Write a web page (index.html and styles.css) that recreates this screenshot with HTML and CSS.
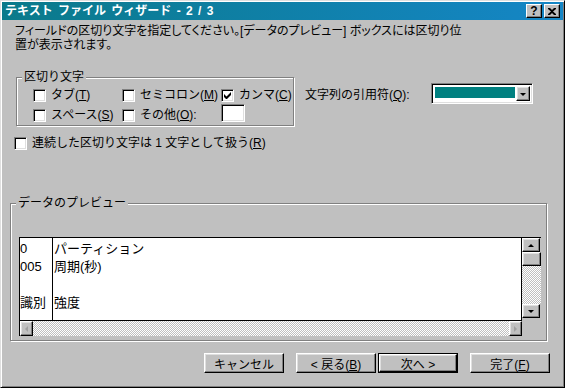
FILE: index.html
```html
<!DOCTYPE html>
<html lang="ja">
<head>
  <meta charset="UTF-8">
  <title>テキスト ファイル ウィザード - 2 / 3</title>
  <link rel="stylesheet" href="styles.css">
</head>
<body>
  <div class="dialog">
    <div class="titlebar">
      <span class="title">テキスト ファイル ウィザード - 2 / 3</span>
      <span class="tb-btn tb-help">?</span>
      <span class="tb-btn tb-close">
        <svg width="8" height="7" viewBox="0 0 8 7"><path d="M0 0h2l2 2 2-2h2v1L5 3.5 8 6v1H6L4 5 2 7H0V6l3-2.5L0 1z" fill="#000"/></svg>
      </span>
    </div>

    <div class="content">
      <p class="intro">フィールドの区切り文字を指定してください。[データのプレビュー] ボックスには区切り位<br>置が表示されます。</p>

      <div class="options">
        <div class="group delim">
          <span class="group-label">区切り文字</span>
          <div class="delim-grid">
            <label class="check"><span class="box"></span><span>タブ(<u>T</u>)</span></label>
            <label class="check"><span class="box"></span><span>セミコロン(<u>M</u>)</span></label>
            <label class="check"><span class="box"><svg width="7" height="7" viewBox="0 0 7 7"><path d="M0 2v3l2 2h1l4-4V0L2.5 4.5z" fill="#000"/></svg></span><span>カンマ(<u>C</u>)</span></label>
            <label class="check"><span class="box"></span><span>スペース(<u>S</u>)</span></label>
            <label class="check"><span class="box"></span><span>その他(<u>O</u>):</span></label>
            <span class="field other"></span>
          </div>
        </div>

        <div class="quote">
          <span class="quote-label">文字列の引用符(<u>Q</u>):</span>
          <div class="combo">
            <div class="combo-val"><span class="combo-sel"></span></div>
            <span class="combo-btn btn3d"><span class="tri-down"></span></span>
          </div>
        </div>
      </div>

      <label class="check consec"><span class="box"></span><span>連続した区切り文字は 1 文字として扱う(<u>R</u>)</span></label>

      <div class="group preview">
        <span class="group-label">データのプレビュー</span>
        <div class="pv-box">
          <div class="pv-data">
            <div class="pv-col first">
              <div>0</div>
              <div>005</div>
              <div>&nbsp;</div>
              <div>識別</div>
            </div>
            <div class="pv-col">
              <div>パーティション</div>
              <div>周期(秒)</div>
              <div>&nbsp;</div>
              <div>強度</div>
            </div>
          </div>
          <div class="vscroll">
            <span class="sb-btn btn3d"><span class="tri-up"></span></span>
            <span class="sb-thumb btn3d"></span>
            <span class="sb-track"></span>
            <span class="sb-btn btn3d"><span class="tri-down"></span></span>
          </div>
          <div class="hscroll">
            <span class="sb-btn btn3d"><span class="tri-left"></span></span>
            <span class="sb-track"></span>
            <span class="sb-btn btn3d"><span class="tri-right"></span></span>
          </div>
          <div class="corner"></div>
        </div>
      </div>

      <div class="buttons">
        <span class="btn btn3d">キャンセル</span>
        <span class="btn btn3d back"><span>&lt; 戻る(<u>B</u>)</span></span>
        <span class="btn default"><span class="btn3d">次へ &gt;</span></span>
        <span class="btn btn3d finish"><span>完了(<u>F</u>)</span></span>
      </div>
    </div>
  </div>
</body>
</html>
```

FILE: styles.css
```css
body { margin: 0; font-family: "Liberation Sans", "Noto Sans CJK JP", sans-serif; font-size: 12px; color: #000; }
u { text-decoration: underline; text-underline-offset: 1px; }

.dialog { box-sizing: border-box; width: 565px; height: 388px; background: #c0c0c0; padding: 1px;
  border: 1px solid; border-color: #dfdfdf #000 #000 #dfdfdf; box-shadow: inset 1px 1px #fff, inset -1px -1px #808080; }

.titlebar { height: 18px; display: flex; align-items: center; padding: 0 3px 0 3px; color: #fff;
  background: linear-gradient(to right, #0a7a8a, #1586c6); }
.title { flex: 1; font-weight: bold; font-size: 12px; line-height: 14px; white-space: pre; word-spacing: 2px; }
.tb-btn { box-sizing: border-box; width: 16px; height: 14px; background: #c0c0c0; color: #000; display: flex; align-items: center; justify-content: center;
  border: 1px solid; border-color: #fff #000 #000 #fff; box-shadow: inset -1px -1px #808080; font: bold 12px "Liberation Sans", sans-serif; }
.tb-close { margin-left: 2px; }

.btn3d { background: #c0c0c0; border: 1px solid; border-color: #fff #000 #000 #fff; box-shadow: inset -1px -1px #808080, inset 1px 1px #dfdfdf; box-sizing: border-box; }

.content { padding: 4px 0 0 8px; }
.intro { margin: 0 0 0 5px; line-height: 14px; white-space: nowrap; font-feature-settings: "palt"; }

.group { position: relative; border: 1px solid #808080; box-shadow: inset 1px 1px #fff, 1px 1px #fff; box-sizing: border-box; }
.group-label { position: absolute; left: 5px; top: -8px; padding: 0 2px; background: #c0c0c0; line-height: 14px; }

.options { display: flex; align-items: flex-start; margin-top: 25px; }
.delim { margin-left: 6px; width: 278px; height: 49px; padding: 8px 0 0 16px; }
.delim-grid { display: grid; grid-template-columns: 89px 99px auto; grid-auto-rows: 18px; row-gap: 2px; }

.check { display: flex; align-items: center; gap: 5px; white-space: nowrap; line-height: 13px; }
.box { box-sizing: border-box; width: 13px; height: 13px; flex: none; background: #fff; display: flex; align-items: center; justify-content: center;
  border: 1px solid; border-color: #808080 #fff #fff #808080; box-shadow: inset 1px 1px #000, inset -1px -1px #dfdfdf; }

.field { box-sizing: border-box; background: #fff; border: 1px solid; border-color: #808080 #fff #fff #808080; box-shadow: inset 1px 1px #000, inset -1px -1px #dfdfdf; }
.other { width: 24px; height: 18px; margin-top: -2px; }

.quote { display: flex; align-items: center; margin: 6px 0 0 11px; }
.quote-label { width: 126px; white-space: nowrap; }
.combo { box-sizing: border-box; width: 102px; height: 21px; display: flex; padding: 2px; background: #fff;
  border: 1px solid; border-color: #808080 #fff #fff #808080; box-shadow: inset 1px 1px #000, inset -1px -1px #dfdfdf; }
.combo-val { flex: 1; padding: 1px 1px 3px 1px; }
.combo-sel { display: block; height: 100%; background: #008080; }
.combo-btn { width: 14px; display: flex; align-items: center; justify-content: center; }

.tri-down, .tri-up, .tri-left, .tri-right { width: 0; height: 0; border: 3px solid transparent; }
.tri-down { border-top: 3px solid #000; border-bottom: 0; margin-top: 1px; }
.tri-up { border-bottom: 3px solid #000; border-top: 0; }
.tri-left { border-right: 3px solid #a0a0a0; border-left: 0; }
.tri-right { border-left: 3px solid #a0a0a0; border-right: 0; }

.consec { margin: 11px 0 0 4px; }

.preview { width: 537px; margin-top: 53px; padding: 33px 5px 4px 8px; }
.pv-box { display: grid; grid-template-columns: 1fr 19px; grid-template-rows: 83px 15px; border-top: 1px solid #000; border-left: 1px solid #000; }
.pv-data { background: #fff; display: flex; border-right: 1px solid #000; border-bottom: 1px solid #000; font-size: 13px; line-height: 18px; }
.pv-col { padding-top: 2px; padding-left: 1px; white-space: nowrap; }
.pv-col.first { width: 32px; padding-left: 0; border-right: 1px solid #000; }

.vscroll { display: flex; flex-direction: column; padding-bottom: 3px; }
.hscroll { display: flex; }
.sb-btn { width: 18px; height: 14px; display: flex; align-items: center; justify-content: center; flex: none; }
.hscroll .sb-btn { width: 13px; height: 15px; }
.sb-thumb { height: 14px; flex: none; }
.sb-track { flex: 1; background: repeating-conic-gradient(#c0c0c0 0 25%, #fff 0 50%) 0 0 / 2px 2px; }
.corner { background: #c0c0c0; }

.buttons { display: flex; margin-top: 12px; padding-left: 194px; }
.btn { box-sizing: border-box; width: 80px; height: 20px; display: flex; align-items: center; justify-content: center; white-space: nowrap; }
.back { margin-left: 12px; }
.default { margin-left: 2px; border: 1px solid #000; }
.default .btn3d { width: 100%; height: 100%; display: flex; align-items: center; justify-content: center; }
.finish { margin-left: 12px; }
```
